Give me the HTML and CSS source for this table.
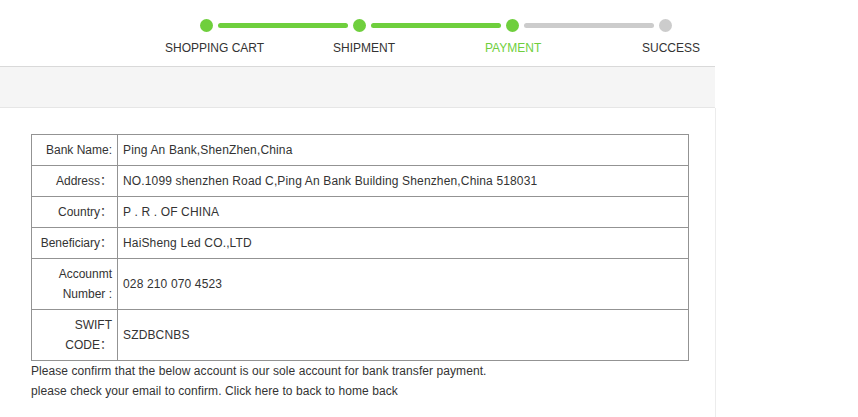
FILE: index.html
```html
<!DOCTYPE html>
<html>
<head>
<meta charset="utf-8">
<link rel="stylesheet" href="styles.css">
</head>
<body>
<div class="wrap">
  <div class="header">
    <div class="steps">
      <span class="dot done"></span><span class="bar done"></span>
      <span class="dot done"></span><span class="bar done"></span>
      <span class="dot done"></span><span class="bar"></span>
      <span class="dot"></span>
    </div>
    <div class="labels">
      <span>SHOPPING CART</span>
      <span>SHIPMENT</span>
      <span class="active">PAYMENT</span>
      <span>SUCCESS</span>
    </div>
  </div>
  <div class="band"></div>
  <div class="content">
    <table class="bank">
      <colgroup><col class="c1"><col></colgroup>
      <tr><td class="lbl">Bank Name:</td><td class="val">Ping An Bank,ShenZhen,China</td></tr>
      <tr><td class="lbl">Address：</td><td class="val">NO.1099 shenzhen Road C,Ping An Bank Building Shenzhen,China 518031</td></tr>
      <tr><td class="lbl">Country：</td><td class="val">P . R . OF CHINA</td></tr>
      <tr><td class="lbl">Beneficiary：</td><td class="val">HaiSheng Led CO.,LTD</td></tr>
      <tr><td class="lbl">Accounmt Number :</td><td class="val">028 210 070 4523</td></tr>
      <tr><td class="lbl">SWIFT CODE：</td><td class="val">SZDBCNBS</td></tr>
    </table>
    <p class="note">Please confirm that the below account is our sole account for bank transfer payment.</p>
    <p class="note">please check your email to confirm. Click here to back to home back</p>
  </div>
</div>
</body>
</html>
```
FILE: styles.css
```css
html, body {
  margin: 0;
  padding: 0;
  background: #fff;
}
body {
  font-family: "Liberation Sans", Arial, "Noto Sans CJK SC", sans-serif;
  font-size: 12px;
  color: #333;
  height: 417px;
  overflow: hidden;
}
.wrap {
  width: 715px;
}
.header {
  height: 66px;
  border-bottom: 1px solid #d9d9d9;
  box-sizing: content-box;
}
.steps {
  display: flex;
  align-items: center;
  padding-top: 19px;
  padding-left: 200px;
  height: 13px;
}
.dot {
  width: 13px;
  height: 13px;
  border-radius: 50%;
  background: #ccc;
  flex: none;
}
.bar {
  width: 130px;
  height: 5px;
  border-radius: 3px;
  background: #ccc;
  margin: 0 5px;
  flex: none;
}
.dot.done, .bar.done {
  background: #6fcf3d;
}
.labels {
  display: grid;
  grid-template-columns: 168px 152px 157px auto;
  padding-left: 165px;
  margin-top: 8px;
  line-height: 16px;
  white-space: nowrap;
}
.labels .active {
  color: #6fcf3d;
}
.band {
  height: 40px;
  background: #f5f5f5;
  border-bottom: 1px solid #e6e6e6;
}
.content {
  border-right: 1px solid #ececec;
  padding: 26px 0 20px 31px;
  height: 309px;
  box-sizing: border-box;
  width: 716px;
}
.bank {
  border-collapse: collapse;
  table-layout: fixed;
  width: 658px;
}
.bank .c1 {
  width: 86px;
}
.bank td {
  border: 1px solid #939393;
  padding: 5px;
  line-height: 20px;
  vertical-align: middle;
}
.bank td.lbl {
  text-align: right;
}
.bank td.val {
  letter-spacing: 0.15px;
}
.note {
  margin: 0;
  line-height: 20px;
  letter-spacing: 0.07px;
}
```
